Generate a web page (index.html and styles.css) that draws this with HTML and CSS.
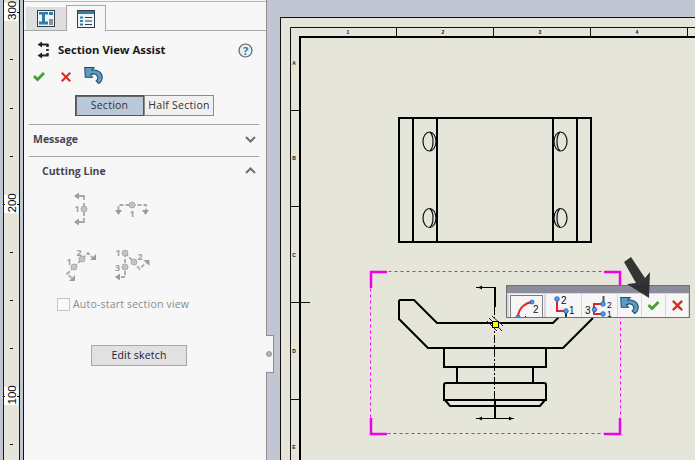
FILE: index.html
```html
<!DOCTYPE html>
<html lang="en">
<head>
<meta charset="utf-8">
<title>Section View Assist</title>
<link rel="stylesheet" href="styles.css">
</head>
<body>
<svg width="0" height="0" class="defs">
  <defs>
    <path id="undo" d="M0.5 .5 L9.5 .5 L7.5 3 C13 2 17.5 5.5 17.5 10 C17.5 13 16 15 14 16 L11.5 13.5 C13 12.500 13.500 11 13 9.500 C12 6.500 8.500 6 6 7.500 L8 10 L1 10 Z"/>
    <path id="check" d="M0 5 L2 3 L4.500 5.500 L10 0 L12 2 L4.500 9.500 Z"/>
    <path id="cross" d="M1.500 0 L5 3.500 L8.500 0 L10 1.500 L6.500 5 L10 8.500 L8.500 10 L5 6.500 L1.500 10 L0 8.500 L3.500 5 L0 1.500 Z"/>
  </defs>
</svg>

<svg class="ruler" width="24" height="460" viewBox="0 0 24 460">
  <rect x="0" y="0" width="3" height="460" fill="#c2c6d2"/>
  <rect x="3.500" y="-1" width="16" height="462" class="ruler-face"/>
  <rect x="20" y="0" width="3" height="460" fill="#c2c6d2"/>
  <line x1="23.500" y1="0" x2="23.500" y2="460" class="ink"/>
  <path class="ink" d="M10 59.500h3M10 108.500h3M10 156.500h3M10 252.500h3M10 300.500h3M10 348.500h3M10 444.500h3"/>
  <g>
    <rect x="4" y="3" width="14" height="18" fill="#fff"/>
    <text class="ruler-num" transform="translate(15.500 20) rotate(-90)">300</text>
    <rect x="4" y="195" width="14" height="18" fill="#fff"/>
    <text class="ruler-num" transform="translate(15.500 212.500) rotate(-90)">200</text>
    <rect x="4" y="387" width="14" height="18" fill="#fff"/>
    <text class="ruler-num" transform="translate(15.500 404.500) rotate(-90)">100</text>
    <path class="ink" d="M3 204.500h2M17 204.500h2M3 396.500h2M17 396.500h2M17 12.500h2"/>
  </g>
</svg>

<aside class="panel">
  <div class="tabs">
    <div class="tab">
      <svg width="18" height="17" viewBox="0 0 18 17">
        <rect x=".5" y=".5" width="17" height="16" fill="#eef3f6" stroke="#2c3e4c"/>
        <path d="M2 2h9v2.500h-3v7h3v3h-9v-3h3v-7h-3z" fill="#2f7ea8"/>
        <rect x="12" y="2" width="4" height="3" fill="#2f7ea8"/>
        <rect x="12" y="9" width="4" height="6" fill="#8a8f94"/>
      </svg>
    </div>
    <div class="tab tab-active">
      <svg width="18" height="18" viewBox="0 0 18 18">
        <rect x=".5" y=".5" width="17" height="17" fill="#f2f5f7" stroke="#2c3e4c"/>
        <rect x="1" y="1" width="16" height="3" fill="#2f7ea8"/>
        <path d="M3 6.500h3v2h-3zM3 10h3v2h-3zM3 13.500h3v2h-3z" fill="#2f7ea8"/>
        <path d="M8 7.500h7M8 11h7M8 14.500h7" stroke="#2c3e4c" fill="none"/>
      </svg>
    </div>
  </div>

  <div class="title-row">
    <svg class="title-icon" width="13" height="18" viewBox="37 40 13 18">
      <path d="M47.500 43.500V46M47.500 48V50M47.500 52V54.500" stroke="#222" stroke-width="2.500" fill="none"/>
      <path d="M48.500 43.500H41M48.500 54.500H41" stroke="#222" stroke-width="2" fill="none"/>
      <path d="M37.500 43.500L42 40.500V46.500ZM37.500 54.500L42 51.500V57.500Z" fill="#222"/>
    </svg>
    <h1 class="title">Section View Assist</h1>
    <svg class="help" width="15" height="15" viewBox="0 0 15 15">
      <circle cx="7.500" cy="7.500" r="6.500" fill="#e8eef2" stroke="#5a6670" stroke-width="1.200"/>
      <text x="7.500" y="11.500" class="help-q">?</text>
    </svg>
  </div>

  <div class="actions">
    <svg width="12" height="10" viewBox="0 0 12 10"><use href="#check" class="ok"/></svg>
    <svg width="10" height="10" viewBox="0 0 10 10"><use href="#cross" class="no"/></svg>
    <svg width="19" height="17" viewBox="0 0 18 16.500"><use href="#undo" class="undo"/></svg>
  </div>

  <div class="segments">
    <div class="seg seg-on">Section</div>
    <div class="seg">Half Section</div>
  </div>

  <section class="group group-message">
    <h2 class="group-title">Message</h2>
    <svg class="chev" width="11" height="7" viewBox="0 0 11 7"><path d="M1 1L5.500 5.500L10 1"/></svg>
  </section>

  <section class="group group-cutting">
    <h2 class="group-title group-title-indent">Cutting Line</h2>
    <svg class="chev" width="11" height="7" viewBox="0 0 11 7"><path d="M1 6L5.500 1.500L10 6"/></svg>
  </section>

  <div class="cut-grid">
    <svg width="46" height="44" viewBox="60 188 46 44">
      <path class="cut-line" d="M78 195H84V199M84 202V215M84 217V221H78"/>
      <path class="cut-head" d="M74 195L79 191.500V198.500ZM74 221L79 217.500V224.500Z"/>
      <circle class="cut-dot" cx="84" cy="208" r="3"/>
      <text class="cut-num" x="77" y="211">1</text>
    </svg>
    <svg width="50" height="44" viewBox="106 188 50 44">
      <path class="cut-line cut-dash" d="M118.500 209V204H146V209"/>
      <path class="cut-head" d="M115 209H122L118.500 214ZM142 209H149L145.500 214Z"/>
      <circle class="cut-dot" cx="132" cy="204" r="3"/>
      <text class="cut-num" x="132" y="216">1</text>
    </svg>
    <svg width="46" height="42" viewBox="60 244 46 42">
      <path class="cut-line cut-dash" d="M74 266L82 258L88 252L94 258M74 266L67 273L73 278"/>
      <path class="cut-head" d="M96 259L90 259L96 253ZM75 280L69 280L75 274Z"/>
      <circle class="cut-dot" cx="74" cy="266" r="3"/>
      <circle class="cut-dot" cx="82" cy="258" r="3"/>
      <text class="cut-num" x="69" y="264">1</text>
      <text class="cut-num" x="79" y="255">2</text>
    </svg>
    <svg width="50" height="42" viewBox="106 244 50 42">
      <path class="cut-line cut-dash" d="M125 252L134 261L139.500 268L146 262M125 252V276H119"/>
      <path class="cut-head" d="M149.500 259V265L143.500 259ZM115 276L120 272.500V279.500Z"/>
      <circle class="cut-dot" cx="125" cy="252" r="3"/>
      <circle class="cut-dot" cx="134" cy="261" r="3"/>
      <circle class="cut-dot" cx="125" cy="266" r="3"/>
      <text class="cut-num" x="118" y="255">1</text>
      <text class="cut-num" x="140" y="259">2</text>
      <text class="cut-num" x="117.500" y="270">3</text>
    </svg>
  </div>

  <label class="auto-start">
    <span class="checkbox"></span>
    <span>Auto-start section view</span>
  </label>

  <div class="edit-wrap"><div class="edit-btn">Edit sketch</div></div>

  <div class="handle"><span class="handle-dot"></span></div>
</aside>

<main class="workspace">
  <svg class="sheet" width="428" height="460" viewBox="267 0 428 460">
    <rect class="sheet-face" x="280.500" y="17.500" width="430" height="460"/>
    <path class="frame-thin" d="M290.500 470V27.500H700"/>
    <rect class="frame-thick" x="300" y="37" width="420" height="440"/>
    <path class="frame-thin" d="M396.500 27V37M493.500 27V37M590.500 27V37M687.500 27V37M290 110.500H300M290 206.500H300M290 302.500H300M290 399.500H300M300 302.500H310"/>
    <text class="zone" x="348" y="34">1</text>
    <text class="zone" x="443" y="34">2</text>
    <text class="zone" x="540" y="34">3</text>
    <text class="zone" x="637" y="34">4</text>
    <text class="zone" x="294" y="65">A</text>
    <text class="zone" x="294" y="160">B</text>
    <text class="zone" x="294" y="257">C</text>
    <text class="zone" x="294" y="353">D</text>
    <text class="zone" x="294" y="449">E</text>

    <!-- top view -->
    <g class="part">
      <rect x="399" y="118" width="192" height="124"/>
      <path d="M413 118V242M437 118V242M553 118V242M577 118V242"/>
    </g>
    <g class="hole">
      <ellipse cx="429.500" cy="141.500" rx="6.500" ry="9.500"/>
      <path d="M430 132C434 136 434 147 430 151"/>
      <ellipse cx="429.500" cy="218" rx="6.500" ry="9.500"/>
      <path d="M430 208.500C434 212.500 434 223.500 430 227.500"/>
      <ellipse cx="560.500" cy="141.500" rx="6.500" ry="9.500"/>
      <path d="M560 132C556 136 556 147 560 151"/>
      <ellipse cx="560.500" cy="218" rx="6.500" ry="9.500"/>
      <path d="M560 208.500C556 212.500 556 223.500 560 227.500"/>
    </g>

    <!-- section selection -->
    <rect class="sel-dash" x="370.500" y="271.500" width="250" height="162"/>
    <path class="sel-corner" d="M387 272H371V288M604 272H620V288M371 418V434H387M620 418V434H604"/>

    <!-- front view -->
    <g class="part">
      <path d="M399 300H414L437 323H553L562 314"/>
      <path d="M399 300V319L428 348H563L593 318"/>
      <path d="M444 348V367H546V348"/>
      <path d="M457 367V383M533 367V383"/>
      <path d="M444 385Q444 383 446 383H544Q546 383 546 385V400H444Z"/>
      <path d="M445 400L450 406H540L545 400"/>
      <path d="M495 287V307M495 400V418"/>
    </g>
    <path class="center-line" d="M494.500 307V400"/>
    <path class="dim" d="M476 287.500H495M476 418.500H514"/>
    <path class="dim-head" d="M478 287.500L482 285.500V289.500ZM478 418.500L482 416.500V420.500ZM513 418.500L509 416.500V420.500Z"/>

    <path class="ray-w" d="M490 319L501 330M488 322L498 332M493 317L503 327"/>
    <path class="ray-k" d="M489 318L502 331M487 321L497 331M492 316L503 326"/>
    <rect class="point" x="492.500" y="321.500" width="6" height="6"/>
  </svg>

  <div class="toolbar">
    <div class="toolbar-title"></div>
    <div class="toolbar-row">
      <div class="tool tool-1">
        <svg width="35" height="23" viewBox="509 294 35 23">
          <rect class="focus" x="510.500" y="295.500" width="32" height="24"/>
          <path class="tool-red" d="M518 316C519 308 525 303 532 302"/>
          <circle class="tool-dot" cx="532" cy="302" r="2"/>
          <circle class="tool-dot" cx="518" cy="317" r="2"/>
          <text class="tool-num" x="533" y="313">2</text>
          <path d="M525 316.500H526" stroke="#000"/>
        </svg>
      </div>
      <div class="tool tool-2">
        <svg width="35" height="23" viewBox="546 294 35 23">
          <path d="M566 311V317" stroke="#333" stroke-width="2"/>
          <path class="tool-red" d="M557 299V311H566"/>
          <circle class="tool-dot" cx="557" cy="299" r="2.300"/>
          <circle class="tool-dot" cx="566" cy="311" r="2.300"/>
          <text class="tool-num" x="561" y="304">2</text>
          <text class="tool-num" x="569" y="314">1</text>
        </svg>
      </div>
      <div class="tool tool-3">
        <svg width="35" height="23" viewBox="582 294 35 23">
          <path d="M603.500 296V304" stroke="#555" stroke-width="2"/>
          <path class="tool-red" d="M603 304H594V314H603"/>
          <circle class="tool-dot" cx="603" cy="304" r="2.300"/>
          <circle class="tool-dot" cx="594.500" cy="309.500" r="2.300"/>
          <circle class="tool-dot" cx="603" cy="314" r="2.300"/>
          <text class="tool-num" x="585" y="314">3</text>
          <text class="tool-num tool-num-sm" x="607" y="307.500">2</text>
          <text class="tool-num tool-num-sm" x="607" y="316.500">1</text>
        </svg>
      </div>
      <div class="tool tool-4">
        <svg width="19" height="17" viewBox="0 0 18 16.500"><use href="#undo" class="undo"/></svg>
      </div>
      <div class="tool tool-5">
        <svg width="13" height="10" viewBox="0 0 12 10"><use href="#check" class="ok"/></svg>
      </div>
      <div class="tool tool-6">
        <svg width="11" height="11" viewBox="0 0 10 10"><use href="#cross" class="no"/></svg>
      </div>
    </div>
  </div>

  <svg class="pointer" width="40" height="54" viewBox="0 0 40 54">
    <path d="M2 8L9 3L23 24L28 18L27 44L5 30L14 29Z"/>
  </svg>
</main>
</body>
</html>
```
FILE: styles.css
```css
* { box-sizing: border-box; }
html, body { margin: 0; padding: 0; }
body {
  width: 695px;
  height: 460px;
  overflow: hidden;
  display: flex;
  background: #c2c6d2;
  font-family: "Open Sans", "Noto Sans", sans-serif;
  color: #222;
}
.defs { position: absolute; }
.ruler { flex: none; display: block; }
.ruler-face { fill: #e5e5da; stroke: #1a1a1a; }
.ink { stroke: #111; stroke-width: 1; fill: none; }
.ruler-num { font-family: "Liberation Sans", sans-serif; font-size: 11.5px; fill: #000; }

.panel {
  position: relative;
  flex: none;
  width: 243px;
  height: 460px;
  background: #f7f7f7;
  border-right: 1px solid #8e8e8e;
  padding-top: 1px;
}
.tabs {
  display: flex;
  align-items: flex-end;
  height: 30px;
  padding-left: 2px;
  border-top: 1px solid #b8b8b8;
  border-bottom: 1px solid #a8a8a8;
}
.tab {
  width: 40px;
  height: 24px;
  background: #dedede;
  display: flex;
  align-items: center;
  justify-content: center;
  margin-bottom: -1px;
  border-bottom: 1px solid #a8a8a8;
}
.tab-active {
  height: 26px;
  background: #f7f7f7;
  border: 1px solid #a8a8a8;
  border-bottom: 0;
}
.title-row {
  display: flex;
  align-items: center;
  height: 18px;
  margin-top: 10px;
  padding-left: 13px;
}
.title-icon { flex: none; }
.title { margin: 0 0 0 8px; font-size: 11.3px; font-weight: 700; color: #1a1a1a; white-space: nowrap; line-height: 18px; }
.help { margin-left: 73px; flex: none; }
.help-q { font-family: "Open Sans", sans-serif; font-size: 11px; font-weight: 700; fill: #2f7ea8; text-anchor: middle; }

.actions {
  display: flex;
  align-items: center;
  height: 18px;
  margin-top: 9px;
  padding-left: 9px;
}
.actions svg:nth-child(2) { margin-left: 16px; }
.actions svg:nth-child(3) { margin-left: 13px; margin-top: -3px; }
.ok { fill: #46a02e; }
.no { fill: #d8301a; }
.undo { fill: #5b9dc4; stroke: #1d4c6a; stroke-width: 1; }

.segments {
  display: flex;
  margin: 9px 0 0 51px;
  height: 21px;
  width: 139px;
}
.seg {
  flex: 1;
  border: 1px solid #8c8c8c;
  background: #f0f0f0;
  font-size: 10.5px;
  letter-spacing: .25px;
  line-height: 19px;
  text-align: center;
  color: #333;
  white-space: nowrap;
}
.seg-on {
  flex: none;
  width: 69px;
  background: #b9c9da;
  border: 1px solid #555;
  box-shadow: inset 1px 1px 0 #666;
}
.group {
  display: flex;
  align-items: center;
  justify-content: space-between;
  margin: 0 7px 0 5px;
  padding: 0 3px 0 4px;
}
.group-message { margin-top: 8px; border-top: 1px solid #a8a8a8; height: 32px; padding-bottom: 3px; }
.group-cutting { border-top: 1px solid #a8a8a8; height: 30px; padding-bottom: 2px; }
.group-title { margin: 0; font-size: 10.5px; font-weight: 700; color: #46464f; }
.group-title-indent { margin-left: 9px; }
.chev { flex: none; }
.chev path { fill: none; stroke: #6e6e6e; stroke-width: 2; }

.cut-grid {
  display: grid;
  grid-template-columns: 46px 50px;
  grid-template-rows: 44px 42px;
  row-gap: 12px;
  margin: 3px 0 0 36px;
}
.cut-grid svg { display: block; }
.cut-line { fill: none; stroke: #a8a8a8; stroke-width: 1.800; }
.cut-dash { stroke-dasharray: 4 2; }
.cut-head { fill: #9c9c9c; }
.cut-dot { fill: #c4c4c4; stroke: #aaa; stroke-width: 1; }
.cut-num { font-family: "Open Sans", sans-serif; font-size: 9px; font-weight: 700; fill: #a0a0a0; text-anchor: middle; }

.auto-start {
  display: flex;
  align-items: center;
  gap: 3px;
  margin: 10px 0 0 33px;
  height: 14px;
  font-size: 10.5px;
  letter-spacing: .2px;
  color: #8a8a8a;
  white-space: nowrap;
}
.checkbox {
  flex: none;
  width: 13px;
  height: 13px;
  background: #fafafa;
  border: 1px solid #c4c4c4;
}
.edit-wrap { margin: 34px 0 0 67px; }
.edit-btn {
  width: 96px;
  height: 21px;
  background: #e1e1e1;
  border: 1px solid #a8a8a8;
  font-size: 10.5px;
  letter-spacing: .2px;
  line-height: 19px;
  text-align: center;
  color: #1a1a30;
}
.handle {
  position: absolute;
  left: 242px;
  top: 335px;
  width: 8px;
  height: 38px;
  background: #f7f7f7;
  border: 1px solid #8e8e8e;
  border-left: 0;
  display: flex;
  align-items: center;
}
.handle-dot {
  width: 6px;
  height: 6px;
  border-radius: 50%;
  background: #b4b4b4;
  border: 1px solid #999;
}

.workspace { position: relative; flex: 1; height: 460px; overflow: hidden; }
.sheet { display: block; }
.sheet-face { fill: #e5e5da; stroke: #111; stroke-width: 1; }
.frame-thin { fill: none; stroke: #111; stroke-width: 1; }
.frame-thick { fill: none; stroke: #000; stroke-width: 2; }
.zone { font-family: "Liberation Sans", sans-serif; font-size: 5px; font-weight: 700; fill: #111; text-anchor: middle; }
.part path, .part rect { fill: none; stroke: #000; stroke-width: 2; }
.hole ellipse, .hole path { fill: none; stroke: #111; stroke-width: 1.200; }
.sel-dash { fill: none; stroke: #ff00ff; stroke-width: 1; stroke-dasharray: 3 3; }
.sel-corner { fill: none; stroke: #f000e8; stroke-width: 2.500; }
.center-line { fill: none; stroke: #000; stroke-width: 1; stroke-dasharray: 8 2 2 2; }
.dim { fill: none; stroke: #000; stroke-width: 1; }
.dim-head { fill: #000; }
.ray-w { fill: none; stroke: #fff; stroke-width: 1; }
.ray-k { fill: none; stroke: #222; stroke-width: 1; }
.point { fill: #ffff00; stroke: #000; stroke-width: 1; }

.toolbar {
  position: absolute;
  left: 239px;
  top: 285px;
  width: 184px;
  height: 33px;
  background: #e5e5da;
  border: 1px solid #6f7078;
  overflow: hidden;
}
.toolbar-title { height: 7px; background: #8b8d9c; }
.toolbar-row {
  display: flex;
  gap: 1px;
  height: 24px;
  padding-left: 2px;
  background: #d8d8d8;
}
.tool {
  height: 23px;
  margin-top: 1px;
  background: #f6f6f6;
  display: flex;
  align-items: center;
  justify-content: center;
  flex: none;
}
.tool-1 { width: 35px; }
.tool-2 { width: 35px; margin-left: 1px; }
.tool-3 { width: 35px; }
.tool-4 { width: 23px; }
.tool-5 { width: 23px; }
.tool-6 { width: 22px; }
.focus { fill: none; stroke: #000; stroke-width: 1; stroke-dasharray: 1 1; }
.tool-red { fill: none; stroke: #e8202a; stroke-width: 2; }
.tool-dot { fill: #4a9cf0; stroke: #1c5fae; stroke-width: .8; }
.tool-num { font-family: "Liberation Sans", sans-serif; font-size: 10px; fill: #111; }
.tool-num-sm { font-size: 8.5px; }

.pointer {
  position: absolute;
  left: 355px;
  top: 254px;
  filter: blur(.6px);
}
.pointer path { fill: #2a2a2a; fill-opacity: .95; }
```
